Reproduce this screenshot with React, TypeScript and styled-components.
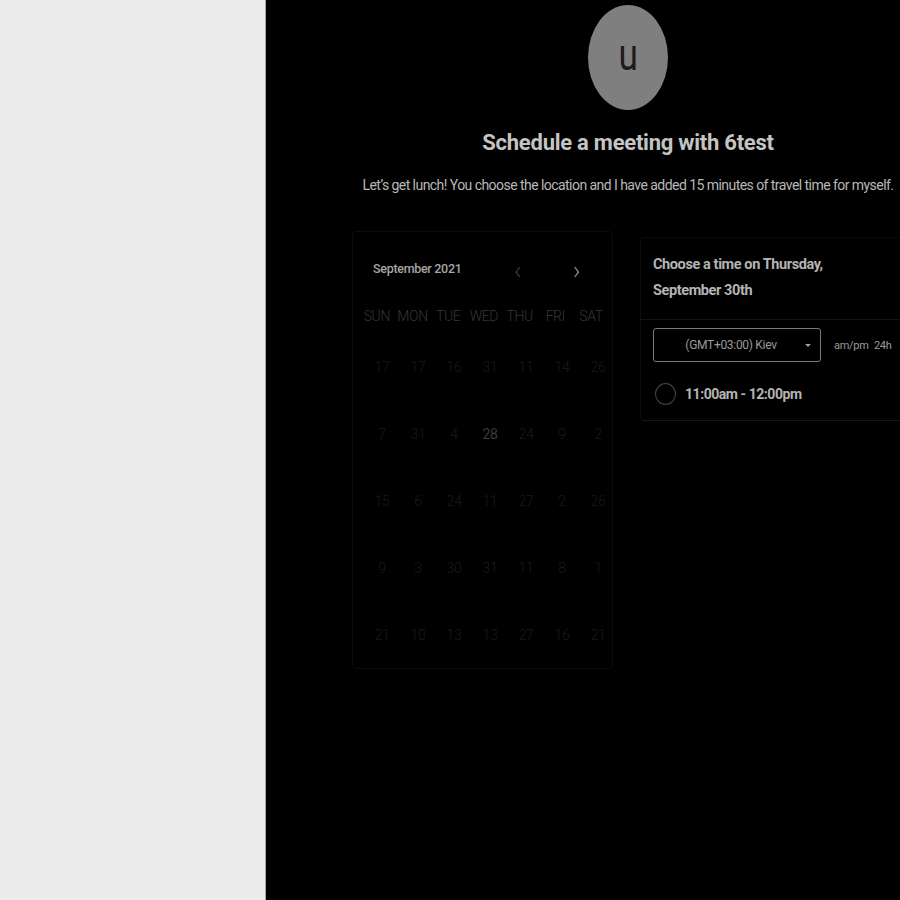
import React from "react"
import styled, { createGlobalStyle } from "styled-components"

const GlobalStyle = createGlobalStyle`
  html, body {
    margin: 0;
    padding: 0;
    height: 100%;
    overflow: hidden;
    background: #000;
  }
  #root {
    height: 100%;
  }
  * {
    box-sizing: border-box;
  }
`

const Page = styled.div`
  display: grid;
  grid-template-columns: 266px 1fr;
  height: 900px;
  width: 900px;
  font-family: Roboto, "Liberation Sans", sans-serif;
`

const SidePanel = styled.aside`
  background: #ececec;
  border-right: 1px solid #a8a8a8;
`

const Main = styled.main`
  background: #000;
  overflow: hidden;
  padding-left: 86px;
`

const Content = styled.div`
  width: 552px;
  display: flex;
  flex-direction: column;
  align-items: center;
`

const Avatar = styled.div`
  width: 80px;
  height: 105px;
  margin-top: 5px;
  border-radius: 50%;
  background: #7f7f7f;
  color: #1c1c1c;
  display: flex;
  align-items: center;
  justify-content: center;
  font-size: 44px;
  line-height: 1;
  padding-bottom: 6px;
`

const AvatarLetter = styled.span`
  display: inline-block;
  transform: scaleX(0.8);
`

const Title = styled.h1`
  margin: 18px 0 0;
  font-size: 22px;
  font-weight: 700;
  color: #c4c4c4;
  letter-spacing: -0.25px;
  line-height: 30px;
`

const Subtitle = styled.p`
  margin: 17px 0 0;
  font-size: 14px;
  font-weight: 400;
  color: #b8b8b8;
  letter-spacing: -0.55px;
  line-height: 20px;
  white-space: nowrap;
`

const Columns = styled.div`
  display: flex;
  align-items: flex-start;
  gap: 27px;
  width: 100%;
  margin-top: 36px;
`

const CalendarCard = styled.section`
  width: 261px;
  height: 438px;
  border: 1px solid #0c0c0c;
  border-radius: 4px;
  padding: 0 6px;
`

const CalendarHeader = styled.div`
  display: flex;
  align-items: center;
  height: 70px;
  padding-left: 14px;
  padding-top: 2px;
`

const MonthLabel = styled.span`
  font-size: 12.5px;
  font-weight: 500;
  color: #a6a6a6;
  letter-spacing: -0.3px;
  width: 116px;
`

const NavArrow = styled.span<{ $bright?: boolean }>`
  width: 59px;
  text-align: center;
  font-size: 26px;
  font-weight: 300;
  line-height: 1;
  color: ${p => (p.$bright ? "#8a8a8a" : "#3a3a3a")};
  margin-top: 4px;
`

const WeekRow = styled.div`
  display: grid;
  grid-template-columns: repeat(7, 35.7px);
  margin-top: 4px;
`

const WeekDay = styled.span`
  text-align: center;
  font-size: 14px;
  font-weight: 300;
  color: #363636;
  letter-spacing: -0.4px;
  line-height: 20px;
`

const DateGrid = styled.div`
  display: grid;
  grid-template-columns: repeat(7, 36px);
  grid-auto-rows: 67px;
  padding-left: 5px;
  margin-top: 26px;
`

const DateCell = styled.span<{ $active?: boolean }>`
  text-align: center;
  font-size: 14px;
  font-weight: ${p => (p.$active ? 400 : 300)};
  color: ${p => (p.$active ? "#3a3a3a" : "#1a1a1a")};
  line-height: 30px;
  letter-spacing: -0.3px;
`

const TimeCard = styled.section`
  width: 264px;
  margin-top: 6px;
  border-left: 1px solid #0e0e0e;
  border-top: 1px solid #0a0a0a;
  border-bottom: 1px solid #161616;
  border-radius: 4px 0 0 4px;
`

const TimeHeader = styled.h2`
  margin: 0;
  padding: 14px 12px 15px;
  font-size: 14.5px;
  font-weight: 700;
  color: #b4b4b4;
  letter-spacing: -0.4px;
  line-height: 26px;
  border-bottom: 1px solid #141414;
`

const ZoneRow = styled.div`
  display: flex;
  align-items: center;
  padding: 8px 12px 0;
  gap: 13px;
`

const ZoneSelect = styled.div`
  width: 168px;
  height: 34px;
  border: 1px solid #7a7a7a;
  border-radius: 3px;
  display: flex;
  align-items: center;
  justify-content: center;
  padding-right: 12px;
  position: relative;
  font-size: 12px;
  color: #9a9a9a;
  letter-spacing: -0.3px;
`

const Caret = styled.span`
  position: absolute;
  right: 9px;
  top: 15px;
  width: 0;
  height: 0;
  border-left: 3px solid transparent;
  border-right: 3px solid transparent;
  border-top: 3px solid #a0a0a0;
`

const FormatToggle = styled.span`
  font-size: 11px;
  color: #9a9a9a;
  letter-spacing: -0.3px;
  word-spacing: 3px;
`

const SlotRow = styled.div`
  display: flex;
  align-items: center;
  gap: 9px;
  padding: 6px 14px 0;
  height: 58px;
`

const Radio = styled.span`
  width: 21px;
  height: 22px;
  border-radius: 50%;
  border: 1.5px solid #474747;
`

const SlotLabel = styled.span`
  font-size: 14px;
  font-weight: 700;
  color: #b4b4b4;
  letter-spacing: -0.45px;
`

const weekDays = ["SUN", "MON", "TUE", "WED", "THU", "FRI", "SAT"]

const dates = [
  [17, 17, 16, 31, 11, 14, 26],
  [7, 31, 4, 28, 24, 9, 2],
  [15, 6, 24, 11, 27, 2, 26],
  [9, 3, 30, 31, 11, 8, 1],
  [21, 10, 13, 13, 27, 16, 21],
]

function App() {
  return (
    <>
      <GlobalStyle />
      <Page>
        <SidePanel />
        <Main>
          <Content>
            <Avatar>
              <AvatarLetter>u</AvatarLetter>
            </Avatar>
            <Title>Schedule a meeting with 6test</Title>
            <Subtitle>
              Let’s get lunch! You choose the location and I have added 15 minutes of travel time for myself.
            </Subtitle>
            <Columns>
              <CalendarCard>
                <CalendarHeader>
                  <MonthLabel>September 2021</MonthLabel>
                  <NavArrow>‹</NavArrow>
                  <NavArrow $bright>›</NavArrow>
                </CalendarHeader>
                <WeekRow>
                  {weekDays.map(d => (
                    <WeekDay key={d}>{d}</WeekDay>
                  ))}
                </WeekRow>
                <DateGrid>
                  {dates.flatMap((row, r) =>
                    row.map((d, c) => (
                      <DateCell key={`${r}-${c}`} $active={r === 1 && c === 3}>
                        {d}
                      </DateCell>
                    ))
                  )}
                </DateGrid>
              </CalendarCard>
              <TimeCard>
                <TimeHeader>
                  Choose a time on Thursday,
                  <br />
                  September 30th
                </TimeHeader>
                <ZoneRow>
                  <ZoneSelect>
                    (GMT+03:00) Kiev
                    <Caret />
                  </ZoneSelect>
                  <FormatToggle>am/pm 24h</FormatToggle>
                </ZoneRow>
                <SlotRow>
                  <Radio />
                  <SlotLabel>11:00am - 12:00pm</SlotLabel>
                </SlotRow>
              </TimeCard>
            </Columns>
          </Content>
        </Main>
      </Page>
    </>
  )
}

export default App
